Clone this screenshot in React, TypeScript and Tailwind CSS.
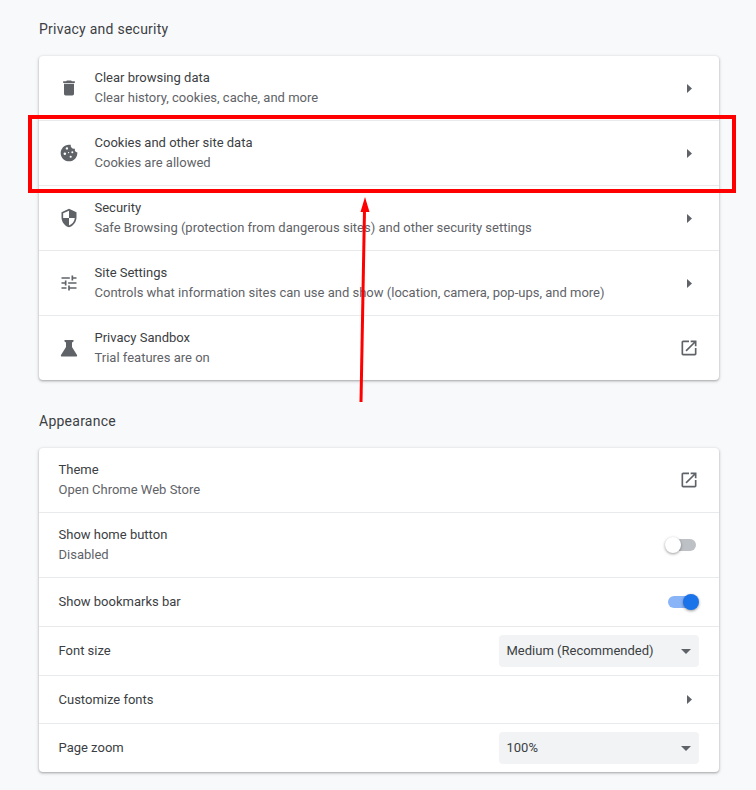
const ICONS = {
  trash: "M6 19c0 1.1.9 2 2 2h8c1.1 0 2-.9 2-2V7H6v12zM19 4h-3.5l-1-1h-5l-1 1H5v2h14V4z",
  shield:
    "M12 1L3 5v6c0 5.55 3.84 10.74 9 12 5.16-1.26 9-6.45 9-12V5l-9-4zm0 10.99h7c-.53 4.12-3.28 7.79-7 8.94V12H5V6.3l7-3.11v8.8z",
  tune: "M3 17v2h6v-2H3zM3 5v2h10V5H3zm10 16v-2h8v-2h-8v-2h-2v6h2zM7 9v2H3v2h4v2h2V9H7zm14 4v-2H11v2h10zm-6-4h2V7h4V5h-4V3h-2v6z",
  external:
    "M19 19H5V5h7V3H5c-1.11 0-2 .9-2 2v14c0 1.1.89 2 2 2h14c1.1 0 2-.9 2-2v-7h-2v7zM14 3v2h3.59l-9.83 9.83 1.41 1.41L19 6.41V10h2V3h-7z",
};

const Icon = ({ d }: { d: string }) => (
  <svg className="h-5 w-5 shrink-0 fill-[#5f6368]" viewBox="0 0 24 24">
    <path d={d} />
  </svg>
);

const CookieIcon = () => (
  <svg className="h-5 w-5 shrink-0" viewBox="0 0 24 24">
    <path
      className="fill-[#5f6368]"
      d="M21.95 10.99c-1.79-.03-3.7-1.95-2.68-4.22-2.97 1-5.78-1.59-5.19-4.56C7.11.74 2 6.41 2 12c0 5.52 4.48 10 10 10 5.89 0 10.54-5.08 9.95-11.01z"
    />
    <circle className="fill-white" cx="9.5" cy="6.5" r="1.4" />
    <circle className="fill-white" cx="16" cy="11" r="1.2" />
    <circle className="fill-white" cx="7" cy="13" r="1.5" />
    <circle className="fill-white" cx="14" cy="16.5" r="1.3" />
    <circle className="fill-white" cx="11.5" cy="11.5" r="0.8" />
  </svg>
);

const FlaskIcon = () => (
  <svg className="h-5 w-5 shrink-0 fill-[#5f6368]" viewBox="0 0 20 20">
    <path d="M5.5 2h9v1.5L13 4.5V9l5 8c.4.8 0 1.5-.8 1.5H2.8c-.8 0-1.2-.7-.8-1.5l5-8V4.5L5.5 3.5z" />
  </svg>
);

const Caret = () => (
  <svg className="h-[9px] w-[5px] mr-[7px] fill-[#5f6368]" viewBox="0 0 5 9">
    <path d="M0 0l5 4.5L0 9z" />
  </svg>
);

const Toggle = ({ on }: { on?: boolean }) => (
  <div className="relative h-4 w-[34px]">
    <div
      className={
        on
          ? "absolute left-[3px] top-[2px] h-3 w-7 rounded-full bg-[#8ab4f8]"
          : "absolute left-[3px] top-[2px] h-3 w-7 rounded-full bg-[#bdc1c6]"
      }
    />
    <div
      className={
        on
          ? "absolute right-0 top-0 h-4 w-4 rounded-full bg-[#1a73e8] shadow-[0_1px_3px_rgba(0,0,0,0.4)]"
          : "absolute left-0 top-0 h-4 w-4 rounded-full bg-white shadow-[0_1px_3px_rgba(0,0,0,0.4)]"
      }
    />
  </div>
);

const Select = ({ value }: { value: string }) => (
  <div className="flex h-8 w-[200px] items-center justify-between rounded bg-[#f1f3f4] pl-[7.5px] pr-[6px] text-[13px] text-[#3c4043]">
    <span>{value}</span>
    <svg className="h-[5px] w-[10px] mr-[2px] fill-[#5f6368]" viewBox="0 0 10 5">
      <path d="M0 0h10L5 5z" />
    </svg>
  </div>
);

const Row = ({
  icon,
  title,
  sub,
  height,
  children,
}: {
  icon?: React.ReactNode;
  title: string;
  sub?: string;
  height: string;
  children: React.ReactNode;
}) => (
  <div className={`${height} flex items-center border-t border-[#e9eaec] first:border-t-0 px-5`}>
    {icon && <div className="mr-4">{icon}</div>}
    <div className="-ml-[0.5px] flex-1 text-[13px] leading-5">
      <div className="text-[#3c4043]">{title}</div>
      {sub && <div className="text-[#5f6368]">{sub}</div>}
    </div>
    {children}
  </div>
);

const External = () => <Icon d={ICONS.external} />;

export default function App() {
  return (
    <div className="relative h-[790px] w-full overflow-hidden bg-[#f8f9fb] px-[39px] pt-[19px] font-['Roboto',sans-serif]">
      <h2 className="text-[14px] leading-5 font-normal tracking-[0.25px] text-[#3c4043]">Privacy and security</h2>
      <div className="mt-[17px] w-[680px] rounded bg-white shadow-[0_1px_2px_rgba(60,64,67,0.3),0_1px_3px_1px_rgba(60,64,67,0.15)]">
        <Row height="h-[64px]" icon={<Icon d={ICONS.trash} />} title="Clear browsing data" sub="Clear history, cookies, cache, and more">
          <Caret />
        </Row>
        <Row height="h-[65px]" icon={<CookieIcon />} title="Cookies and other site data" sub="Cookies are allowed">
          <Caret />
        </Row>
        <Row
          height="h-[65px]"
          icon={<Icon d={ICONS.shield} />}
          title="Security"
          sub="Safe Browsing (protection from dangerous sites) and other security settings"
        >
          <Caret />
        </Row>
        <Row
          height="h-[65px]"
          icon={<Icon d={ICONS.tune} />}
          title="Site Settings"
          sub="Controls what information sites can use and show (location, camera, pop-ups, and more)"
        >
          <Caret />
        </Row>
        <Row height="h-[65px]" icon={<FlaskIcon />} title="Privacy Sandbox" sub="Trial features are on">
          <External />
        </Row>
      </div>

      <h2 className="mt-[31px] text-[14px] leading-5 font-normal tracking-[0.25px] text-[#3c4043]">Appearance</h2>
      <div className="mt-[17px] w-[680px] rounded bg-white shadow-[0_1px_2px_rgba(60,64,67,0.3),0_1px_3px_1px_rgba(60,64,67,0.15)]">
        <Row height="h-[64px]" title="Theme" sub="Open Chrome Web Store">
          <External />
        </Row>
        <Row height="h-[65px]" title="Show home button" sub="Disabled">
          <Toggle />
        </Row>
        <Row height="h-[49px]" title="Show bookmarks bar">
          <Toggle on />
        </Row>
        <Row height="h-[49px]" title="Font size">
          <Select value="Medium (Recommended)" />
        </Row>
        <Row height="h-[48px]" title="Customize fonts">
          <Caret />
        </Row>
        <Row height="h-[49px]" title="Page zoom">
          <Select value="100%" />
        </Row>
      </div>

      {/* annotation drawn on top of the page */}
      <div className="absolute left-[28px] top-[115px] h-[77.5px] w-[708px] border-4 border-[#ff0000]" />
      <svg className="absolute left-[350px] top-[190px] h-[220px] w-[30px]" viewBox="0 0 30 220">
        <path d="M11 212L14.5 20" stroke="#ff0000" strokeWidth="3" fill="none" />
        <path d="M15 7L19.5 22H10.5z" fill="#ff0000" />
      </svg>
    </div>
  );
}
